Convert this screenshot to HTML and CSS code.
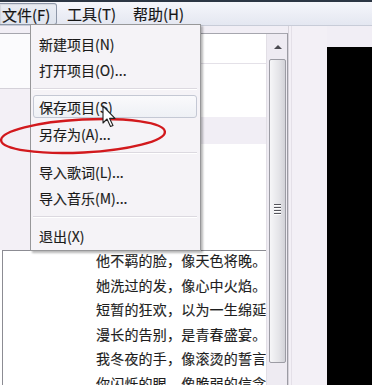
FILE: index.html
```html
<!DOCTYPE html>
<html lang="zh-CN">
<head>
<meta charset="utf-8">
<title>歌词编辑</title>
<link rel="stylesheet" href="styles.css">
</head>
<body>
<div class="window">
  <div class="menubar">
    <div class="mb-item pressed">文件(F)</div>
    <div class="mb-item second">工具(T)</div>
    <div class="mb-item third">帮助(H)</div>
  </div>
  <div class="body">
    <div class="main">
      <div class="listbox">
        <div class="content">
          <div class="top">
            <div class="col-left">
              <div class="cl-a"></div>
              <div class="cl-b"></div>
            </div>
            <div class="col-right">
              <div class="cr-a"></div>
              <div class="cr-b"></div>
              <div class="cr-c"></div>
              <div class="cr-d"></div>
            </div>
          </div>
          <div class="lyrics">
            <div class="lyric-lines">
              <p>他不羁的脸，像天色将晚。</p>
              <p>她洗过的发，像心中火焰。</p>
              <p>短暂的狂欢，以为一生绵延。</p>
              <p>漫长的告别，是青春盛宴。</p>
              <p>我冬夜的手，像滚烫的誓言。</p>
              <p>你闪烁的眼，像脆弱的信念。</p>
            </div>
          </div>
        </div>
        <div class="scrollbar">
          <div class="sb-up"><span class="tri"></span></div>
          <div class="thumb">
            <div class="grip"><i></i><i></i><i></i><i></i></div>
          </div>
        </div>
      </div>
    </div>
    <div class="side"><div class="side-inner"></div></div>
    <div class="black-col"><div class="black"></div></div>
  </div>

  <div class="dropdown">
    <div class="dd-item">新建项目(N)</div>
    <div class="dd-item">打开项目(O)...</div>
    <div class="dd-sep"></div>
    <div class="dd-item hot">保存项目(S)</div>
    <div class="dd-item">另存为(A)...</div>
    <div class="dd-sep"></div>
    <div class="dd-item">导入歌词(L)...</div>
    <div class="dd-item">导入音乐(M)...</div>
    <div class="dd-sep"></div>
    <div class="dd-item">退出(X)</div>
  </div>

  <svg class="ring" width="172" height="44" viewBox="0 0 172 44">
    <ellipse cx="83" cy="21" rx="82" ry="16.5" transform="rotate(-3 83 21)" fill="none" stroke="#d2191d" stroke-width="2.4"/>
  </svg>

  <svg class="cursor" width="16" height="24" viewBox="0 0 16 24">
    <path d="M1 1 L1 18 L5 14 L8.5 21.5 L11 20.5 L7.6 13.4 L13 13.4 Z" fill="#fff" stroke="#222" stroke-width="1.1" stroke-linejoin="round"/>
  </svg>
</div>
</body>
</html>
```

FILE: styles.css
```css
* { box-sizing: border-box; }
html, body { margin: 0; padding: 0; }
body {
  width: 372px;
  height: 385px;
  overflow: hidden;
  font-family: "Noto Sans CJK SC", "Noto Sans", sans-serif;
  color: #1c1c1c;
}
.window {
  position: relative;
  width: 372px;
  height: 385px;
  overflow: hidden;
  background: #f1eef5;
}

/* menu bar */
.menubar {
  height: 26px;
  border-top: 2px solid #2c3644;
  border-bottom: 1px solid #c8ccd8;
  background: linear-gradient(#f5f6fb, #e4e7f1);
  display: flex;
  align-items: center;
}
.mb-item {
  font-size: 15px;
  line-height: 20px;
  height: 22px;
  padding-top: 1px;
  color: #151515;
  -webkit-text-stroke: 0.15px #151515;
  white-space: nowrap;
}
.mb-item.pressed {
  width: 57px;
  padding-left: 2px;
  border: 1px solid #8e97a8;
  border-left: none;
  border-radius: 0 3px 3px 0;
  background: linear-gradient(#e9ecf3, #dfe4ee);
  box-shadow: inset 1px 1px 1px rgba(0,0,0,0.08);
}
.mb-item.second { margin-left: 10px; width: 66px; }

/* body */
.body {
  display: flex;
  height: 359px;
}
.main {
  width: 288px;
  padding-top: 7px;
}
.listbox {
  height: 100%;
  display: flex;
  border-top: 1px solid #a6a6ae;
  border-right: 1px solid #9b9ba3;
  background: #fff;
}
.content {
  width: 266px;
  display: flex;
  flex-direction: column;
}
.top {
  height: 216px;
  display: flex;
}
.col-left { width: 120px; display: flex; flex-direction: column; }
.cl-a { height: 55px; background: #fbfbfd; border-bottom: 1px solid #d4d1d9; }
.cl-b { flex: 1; background: #f3f0f6; }
.col-right { flex: 1; display: flex; flex-direction: column; }
.cr-a { height: 30px; background: #fff; border-bottom: 1px solid #e4e1e8; }
.cr-b { height: 53px; background: #fff; }
.cr-c { height: 27px; background: #f1eef5; }
.cr-d { flex: 1; background: #fff; }

.lyrics {
  flex: 1;
  margin-left: 2px;
  border-top: 1px solid #8c8c93;
  border-left: 1px solid #8c8c93;
  background: #fff;
  overflow: hidden;
}
.lyric-lines {
  margin-top: -3px;
  padding-left: 93px;
}
.lyric-lines p {
  margin: 0;
  font-size: 14px;
  line-height: 24.6px;
  white-space: nowrap;
  color: #1e1e1e;
  letter-spacing: 0.2px;
  -webkit-text-stroke: 0.15px #1e1e1e;
}

/* scrollbar */
.scrollbar {
  width: 21px;
  background: #eeebf2;
  border-left: 1px solid #e2dfe6;
  display: flex;
  flex-direction: column;
  align-items: center;
}
.sb-up {
  height: 25px;
  width: 100%;
  display: flex;
  align-items: center;
  justify-content: center;
}
.tri {
  width: 0;
  height: 0;
  border-left: 4px solid transparent;
  border-right: 4px solid transparent;
  border-bottom: 4px solid #4a4a50;
  margin-left: 1px;
}
.thumb {
  width: 17px;
  height: 304px;
  border: 1px solid #9c9ca4;
  border-radius: 2px;
  background: linear-gradient(90deg, #f6f6f8, #e4e4e8 60%, #d2d2d8);
  padding-top: 144px;
  display: flex;
  justify-content: center;
}
.grip {
  display: flex;
  flex-direction: column;
  gap: 2px;
}
.grip i {
  display: block;
  width: 7px;
  height: 1px;
  background: #55555c;
  box-shadow: 0 1px 0 #fff;
}

.side {
  width: 39px;
  background: #f3f0f6;
  border-left: 1px solid #d6d2da;
  padding-left: 2px;
}
.side-inner {
  height: 100%;
  border-left: 1px solid #e4e0e8;
}
.black-col {
  flex: 1;
  padding-top: 21px;
}
.black { height: 100%; background: #000; }

/* dropdown (overlay) */
.dropdown {
  position: absolute;
  left: 30px;
  top: 24px;
  width: 171px;
  height: 227px;
  background: #f5f3f7;
  border: 1px solid #979799;
  box-shadow: 2px 2px 2px rgba(0,0,0,0.28);
  padding: 5px 3px 0 2px;
}
.dd-item {
  height: 26px;
  line-height: 26px;
  font-size: 14px;
  padding-left: 5px;
  color: #1a1a1a;
  -webkit-text-stroke: 0.15px #1a1a1a;
  white-space: nowrap;
  border: 1px solid transparent;
  border-radius: 3px;
}
.dd-item.hot {
  height: 23px;
  line-height: 22px;
  margin: 1px 0 2px;
  border-color: #c4c8d4;
  background: linear-gradient(#fafafc, #eef0f5);
}
.dd-sep {
  height: 12px;
  display: flex;
  align-items: center;
}
.dd-sep::before {
  content: "";
  display: block;
  width: 100%;
  height: 1px;
  background: #dcd9e0;
  box-shadow: 0 1px 0 #fff;
}

.ring {
  position: absolute;
  left: 0;
  top: 115px;
}
.cursor {
  position: absolute;
  left: 102px;
  top: 105px;
}
```
